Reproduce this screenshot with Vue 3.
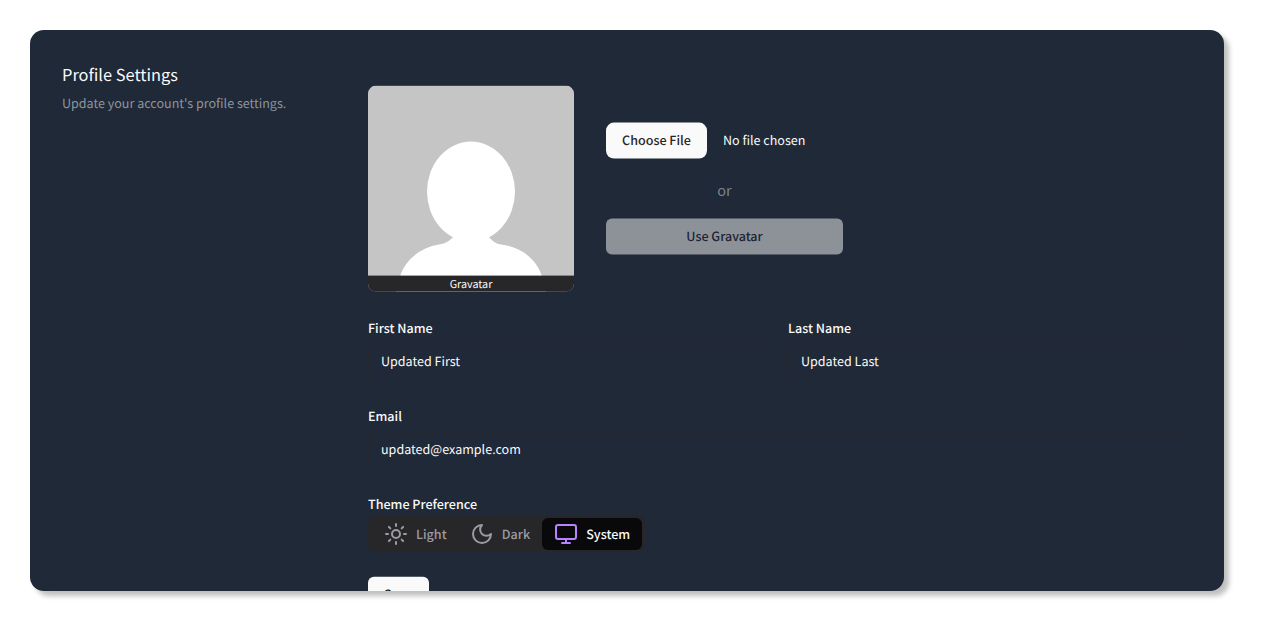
<script setup>
import { ref } from 'vue'

const firstName = ref('Updated First')
const lastName = ref('Updated Last')
const email = ref('updated@example.com')
const theme = ref('system')
</script>

<template>
  <main class="card">
    <header class="intro">
      <h1>Profile Settings</h1>
      <p>Update your account's profile settings.</p>
    </header>

    <form class="settings" @submit.prevent>
      <div class="profile">
        <section class="photo-row">
          <figure class="avatar">
            <svg viewBox="0 0 206 206" aria-hidden="true">
              <rect width="206" height="206" fill="#c5c5c5" />
              <ellipse cx="103" cy="106" rx="44" ry="50" fill="#fff" />
              <path d="M85.500 151C82 155 78 158 71 159C53 162 37 174 32 191L28 206H178L174 191C169 174 153 161 133 159C127 158 124 155 120.500 151L103 140Z" fill="#fff" />
            </svg>
            <figcaption>Gravatar</figcaption>
          </figure>
          <div class="photo-actions">
            <div class="file">
              <button type="button" class="choose">Choose File</button>
              <span class="file-name">No file chosen</span>
            </div>
            <span class="or">or</span>
            <button type="button" class="gravatar">Use Gravatar</button>
          </div>
        </section>

        <div class="names">
          <label class="field"><span>First Name</span><input v-model="firstName" type="text" /></label>
          <label class="field"><span>Last Name</span><input v-model="lastName" type="text" /></label>
        </div>
        <label class="field email"><span>Email</span><input v-model="email" type="text" /></label>
      </div>

      <div class="theme">
        <span class="theme-label">Theme Preference</span>
        <div class="segments">
          <button type="button" class="light" :class="{ active: theme === 'light' }" @click="theme = 'light'">
            <svg viewBox="0 0 24 24"><circle cx="12" cy="12" r="4" /><path d="M12 2v2M12 20v2M4.930 4.930l1.410 1.410M17.660 17.660l1.410 1.410M2 12h2M20 12h2M6.340 17.660l-1.410 1.410M19.070 4.930l-1.410 1.410" /></svg>
            <span>Light</span>
          </button>
          <button type="button" class="dark" :class="{ active: theme === 'dark' }" @click="theme = 'dark'">
            <svg viewBox="0 0 24 24"><path d="M12 3a6 6 0 0 0 9 9 9 9 0 1 1-9-9Z" /></svg>
            <span>Dark</span>
          </button>
          <button type="button" class="system" :class="{ active: theme === 'system' }" @click="theme = 'system'">
            <svg viewBox="0 0 24 24"><rect x="2" y="3" width="20" height="14" rx="2" /><path d="M8 21h8M12 17v4" /></svg>
            <span>System</span>
          </button>
        </div>
      </div>
      <button type="submit" class="save">Save</button>
    </form>
  </main>
</template>

<style>
body {
  background: #fff;
}
</style>

<style scoped>
* {
  box-sizing: border-box;
}
.card {
  display: flex;
  gap: 32px;
  width: 1194px;
  height: 561px;
  margin: 30px;
  padding: 32px;
  overflow: hidden;
  border-radius: 14px;
  background: #1f2937;
  box-shadow: 5px 5px 5px rgba(0, 0, 0, 0.25);
  color: #fafafa;
  font-family: "Noto Sans CJK SC", "Noto Sans", sans-serif;
  font-size: 12.550px;
  line-height: 20px;
  text-rendering: geometricPrecision;
}
.intro {
  flex: 0 0 274px;
}
h1 {
  margin: 0;
  font-size: 16.400px;
  font-weight: 400;
  line-height: 24px;
}
.intro p {
  margin: 7px 0 0;
  color: #8f959f;
}
.settings {
  flex: 1;
  min-width: 0;
  padding-top: 24px;
}
button,
input {
  font: inherit;
  color: inherit;
  text-rendering: inherit;
}
button {
  border: 0;
  padding: 0;
}
.profile {
  transform: translateY(-0.400px);
}
.photo-row {
  display: flex;
  align-items: center;
  gap: 32px;
}
.avatar {
  position: relative;
  width: 206px;
  height: 206px;
  margin: 0;
  overflow: hidden;
  border-radius: 8px;
}
.avatar svg {
  display: block;
  width: 100%;
  height: 100%;
}
figcaption {
  position: absolute;
  inset: auto 0 0;
  height: 15.600px;
  background: #272729;
  font-size: 10.750px;
  line-height: 17px;
  text-align: center;
}
.photo-actions {
  display: flex;
  flex-direction: column;
  width: 237px;
}
.file {
  display: flex;
  align-items: center;
  gap: 16px;
}
.file-name {
  padding-bottom: 2px;
}
.choose {
  width: 101px;
  height: 36px;
  padding-bottom: 2px;
  border-radius: 8px;
  background: #fafafa;
  color: #27272a;
  font-weight: 500;
}
.or {
  margin: 20px 0 16px;
  color: #7d848e;
  font-size: 14.500px;
  line-height: 24px;
  text-align: center;
}
.gravatar {
  height: 36px;
  padding: 0 0 2px;
  border-radius: 6px;
  background: #8d9299;
  color: #1e2431;
  font-weight: 500;
}
.names {
  display: grid;
  grid-template-columns: 1fr 1fr;
  gap: 16px;
  margin-top: 27px;
}
.field {
  display: block;
}
.field span {
  display: block;
  padding-bottom: 2px;
  font-weight: 500;
  line-height: 18px;
}
.field input {
  display: block;
  width: 100%;
  height: 36px;
  margin-top: 5px;
  padding: 0 12px 3px;
  border: 1px solid #27292f;
  border-radius: 6px;
  outline: 0;
  background: transparent;
}
.email {
  margin-top: 27px;
}
.theme {
  margin-top: 26px;
}
.theme-label {
  display: block;
  font-weight: 500;
}
.segments {
  display: flex;
  width: 277px;
  height: 36px;
  margin-top: 2px;
  padding: 2px 3px;
  border-radius: 8px;
  background: #27272a;
}
.segments button {
  display: flex;
  align-items: center;
  gap: 8px;
  height: 32px;
  padding-left: 12.500px;
  border-radius: 6px;
  background: transparent;
  color: #9b9ba3;
  font-weight: 500;
}
.segments svg {
  width: 24px;
  height: 24px;
  fill: none;
  stroke: currentColor;
  stroke-width: 2;
  stroke-linecap: round;
  stroke-linejoin: round;
}
.segments .light {
  width: 86.500px;
  padding-left: 13px;
}
.segments .dark {
  width: 85px;
}
.segments .system {
  width: 100px;
  padding-left: 12px;
}
.segments .active {
  background: #09090b;
  color: #fafafa;
}
.segments .active svg {
  stroke: #b982ff;
}
.save {
  width: 60.500px;
  height: 36px;
  margin-top: 25px;
  padding-bottom: 2px;
  border-radius: 6px;
  background: #fafafa;
  color: #18181b;
  font-weight: 500;
  transform: translateY(-0.300px);
}
</style>
